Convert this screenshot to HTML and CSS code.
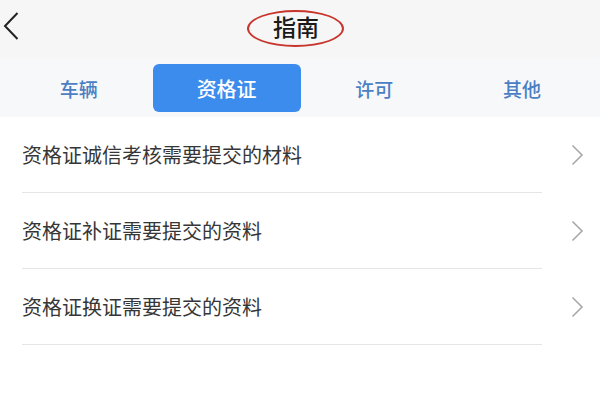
FILE: index.html
```html
<!DOCTYPE html>
<html lang="zh-CN">
<head>
<meta charset="utf-8">
<title>指南</title>
<link rel="stylesheet" href="styles.css">
</head>
<body>
<header class="topbar">
  <div class="back">
    <svg width="16" height="28" viewBox="0 0 16 28"><polyline points="14.5,1 2,14 14.5,27" fill="none" stroke="#222" stroke-width="2"/></svg>
  </div>
  <h1 class="title"><span class="title-text">指南</span></h1>
  <div></div>
</header>
<nav class="tabs">
  <div class="tab">车辆</div>
  <div class="tab active">资格证</div>
  <div class="tab">许可</div>
  <div class="tab">其他</div>
</nav>
<ul class="list">
  <li class="row"><span class="label">资格证诚信考核需要提交的材料</span><svg class="chev" width="13" height="22" viewBox="0 0 13 22"><polyline points="1.5,1.5 11,11 1.5,20.5" fill="none" stroke="#a9a9a9" stroke-width="1.6"/></svg></li>
  <li class="row"><span class="label">资格证补证需要提交的资料</span><svg class="chev" width="13" height="22" viewBox="0 0 13 22"><polyline points="1.5,1.5 11,11 1.5,20.5" fill="none" stroke="#a9a9a9" stroke-width="1.6"/></svg></li>
  <li class="row"><span class="label">资格证换证需要提交的资料</span><svg class="chev" width="13" height="22" viewBox="0 0 13 22"><polyline points="1.5,1.5 11,11 1.5,20.5" fill="none" stroke="#a9a9a9" stroke-width="1.6"/></svg></li>
</ul>
</body>
</html>
```
FILE: styles.css
```css
* { box-sizing: border-box; }
html, body { margin: 0; padding: 0; }
body {
  width: 600px;
  height: 402px;
  background: #ffffff;
  font-family: "Noto Sans CJK SC", "Noto Sans", sans-serif;
  overflow: hidden;
}
.topbar {
  height: 58px;
  background: #f6f6f6;
  display: grid;
  grid-template-columns: 1fr auto 1fr;
  align-items: start;
}
.back {
  padding: 12px 0 0 3px;
  display: flex;
}
.back svg { display: block; }
.title {
  margin: 10px 0 0;
  width: 97px;
  height: 37px;
  border: 2px solid #c8352d;
  border-radius: 50%;
  display: flex;
  align-items: center;
  justify-content: center;
  transform: translateX(-5px);
}
.title-text {
  font-size: 23px;
  font-weight: 500;
  color: #1a1a1a;
  line-height: 28px;
  margin: -5px 0 0 2px;
}
.tabs {
  height: 59px;
  background: #f7f8fa;
  display: grid;
  grid-template-columns: repeat(4, 1fr);
  padding: 6px 4px 5px 5px;
}
.tab {
  display: flex;
  align-items: center;
  justify-content: center;
  font-size: 19px;
  font-weight: 500;
  color: #4b7fc4;
  border-radius: 6px;
}
.tab.active {
  background: #3b8ced;
  color: #ffffff;
  font-size: 20px;
}
.list {
  list-style: none;
  margin: 0;
  padding: 0;
}
.row {
  height: 76px;
  margin: 0 58px 0 22px;
  border-bottom: 1px solid #e6e6e6;
  display: flex;
  align-items: center;
  position: relative;
}
.label {
  font-size: 20px;
  color: #363636;
  line-height: 24px;
}
.chev {
  position: absolute;
  right: -42px;
  top: 27px;
}
```
